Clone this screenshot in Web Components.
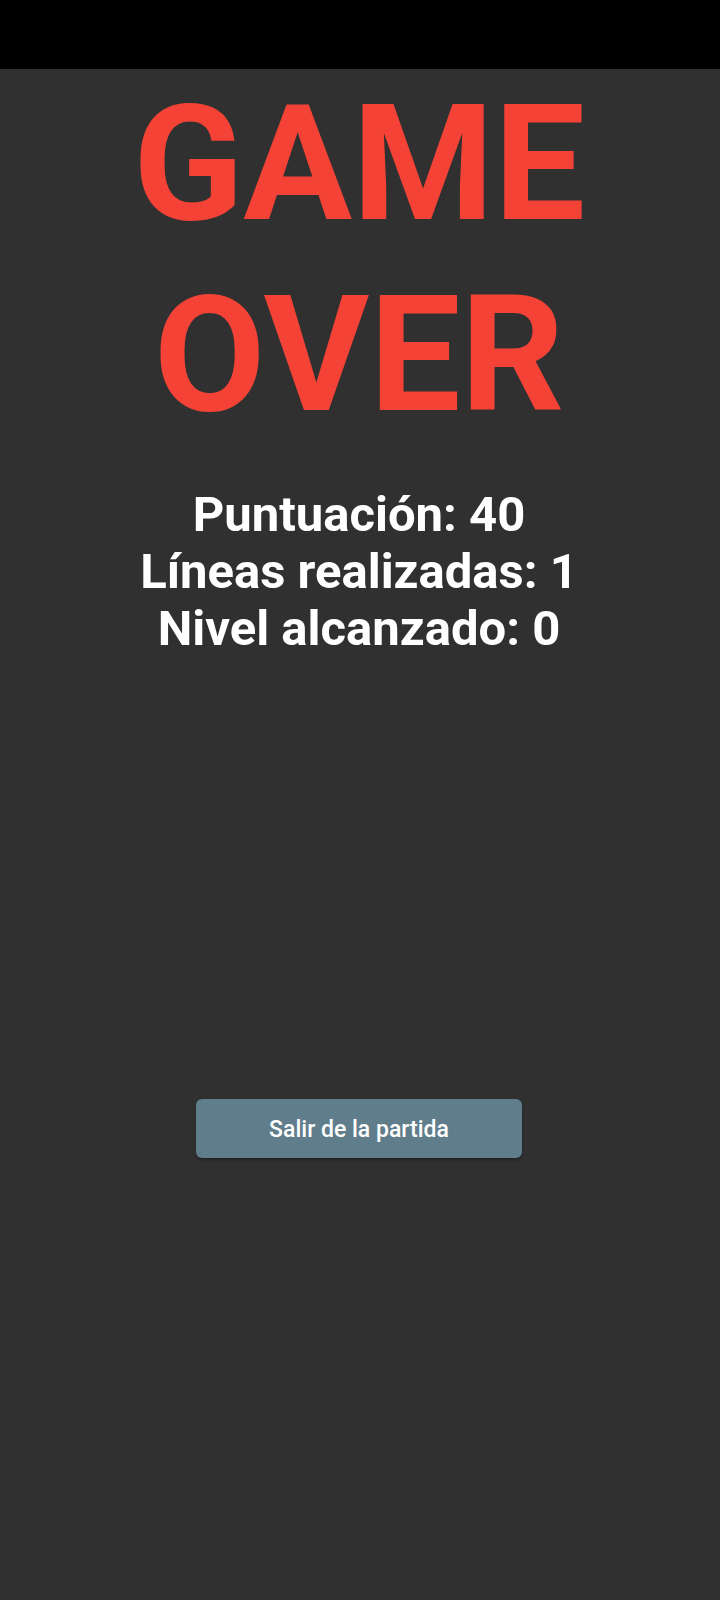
<!DOCTYPE html>
<html lang="es">
<head>
<meta charset="utf-8">
<meta name="viewport" content="width=device-width, initial-scale=1">
<title>Game Over</title>
<style>
html, body { margin: 0; background: #303030; }
body { font-family: Roboto, sans-serif; }
</style>
</head>
<body>
<game-over-screen>
  <score-line label="Puntuación" value="40"></score-line>
  <score-line label="Líneas realizadas" value="1"></score-line>
  <score-line label="Nivel alcanzado" value="0"></score-line>
  <action-button slot="action">Salir de la partida</action-button>
</game-over-screen>
<script>
class GameOverScreen extends HTMLElement {
  constructor() {
    super();
    this.attachShadow({ mode: 'open' }).innerHTML = `
      <style>
        :host { display: flex; flex-direction: column; min-height: 100vh; background: #303030; color: #fff; text-align: center; }
        .status { height: 69px; background: #000; }
        main { flex: 1; display: flex; flex-direction: column; align-items: center; padding-right: 2px; }
        h1 { margin: 0; width: min-content; font-size: 162px; line-height: 191px; font-weight: 700; color: #f44336; }
        .scores { padding-top: 35px; }
        .action { padding-top: 442px; width: 100%; display: flex; justify-content: center; }
      </style>
      <div class="status"></div>
      <main>
        <h1>GAME OVER</h1>
        <div class="scores"><slot></slot></div>
        <div class="action"><slot name="action"></slot></div>
      </main>`;
  }
}
class ScoreLine extends HTMLElement {
  connectedCallback() {
    if (this.shadowRoot) return;
    const root = this.attachShadow({ mode: 'open' });
    root.innerHTML = `
      <style>
        :host { display: block; font-size: 49px; line-height: 57px; font-weight: 700; }
      </style>
      <span></span>`;
    root.querySelector('span').textContent = `${this.getAttribute('label')}: ${this.getAttribute('value')}`;
  }
}
class ActionButton extends HTMLElement {
  constructor() {
    super();
    this.attachShadow({ mode: 'open' }).innerHTML = `
      <style>
        :host { display: block; width: 326px; max-width: 90%; }
        button { display: block; width: 100%; padding: 17px 0 14px; border: 0; border-radius: 6px; background: #607d8b; color: #fff; font: 500 23px/28px Roboto, sans-serif; box-shadow: 0 2px 3px rgba(0,0,0,.3); cursor: pointer; }
      </style>
      <button type="button"><slot></slot></button>`;
  }
}
customElements.define('game-over-screen', GameOverScreen);
customElements.define('score-line', ScoreLine);
customElements.define('action-button', ActionButton);
</script>
</body>
</html>
